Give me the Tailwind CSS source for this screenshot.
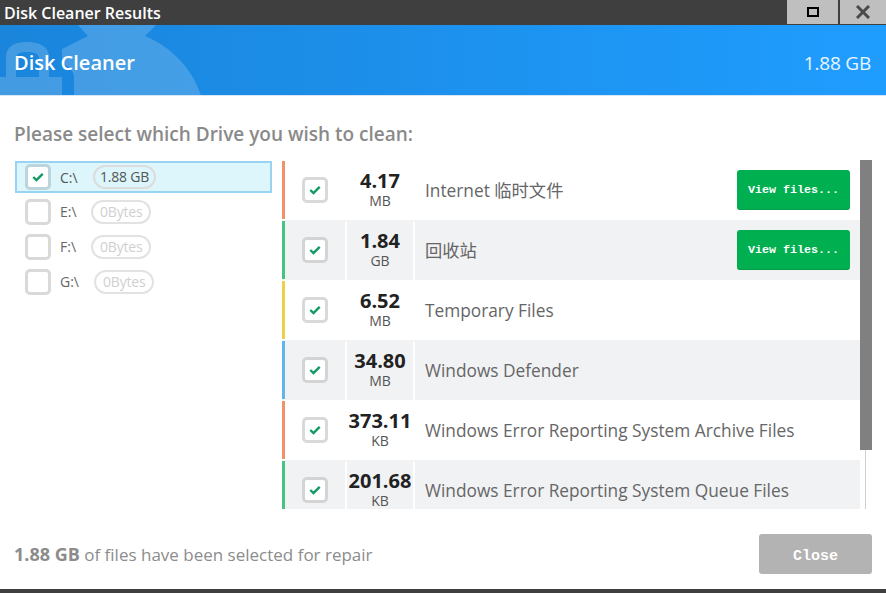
<!DOCTYPE html>
<html><head><meta charset="utf-8">
<script src="https://cdn.jsdelivr.net/npm/@tailwindcss/browser@4"></script>
<title>Disk Cleaner Results</title></head>
<body class="m-0 overflow-hidden bg-white">
<div class="w-[886px] h-[593px] flex flex-col bg-white font-['Open_Sans','Noto_Sans_CJK_SC',sans-serif]">
  <div class="h-[25px] shrink-0 bg-[#3f3f3f] flex items-start justify-between">
    <span class="pl-[4px] text-[16px] leading-[26px] font-semibold text-white">Disk Cleaner Results</span>
    <div class="flex gap-[2px]">
      <div class="w-[51px] h-[24px] bg-[#bfbfbf] flex items-center justify-center"><div class="w-[12px] h-[10px] border-2 border-black bg-transparent"></div></div>
      <div class="w-[46px] h-[24px] bg-[#bfbfbf] flex items-center justify-center">
        <svg width="14" height="14" viewBox="0 0 14 14"><path d="M1 1L13 13M13 1L1 13" stroke="#4a4a4a" stroke-width="3"/></svg>
      </div>
    </div>
  </div>
  <div class="relative h-[71px] shrink-0 overflow-hidden bg-gradient-to-r from-[#1a85db] to-[#1f9dff] border-b border-[#d6e6f5] flex items-center justify-between pl-[14px] pr-[15px] pt-[6px]">
    <svg class="absolute left-0 top-0" width="210" height="70" viewBox="0 0 210 70" fill="#ffffff" fill-opacity="0.18">
      <path d="M78 0H156L145 11C172 22 192 44 201 70H74V52C74 47 70 42 62 38V24L88 11Z"/>
      <path fill-rule="evenodd" d="M6 52V32C6 22 14 17 27 17C40 17 49 22 49 32V52ZM16 52H39V34C39 28 34 27 27 27C20 27 16 28 16 34Z"/>
      <path d="M0 52H62V70H0Z"/>
    </svg>
    <span class="relative text-[20px] font-semibold text-white">Disk Cleaner</span>
    <span class="relative text-[19px] text-white/90 tracking-[-0.2px]">1.88 GB</span>
  </div>
  <div class="flex-1 min-h-0 flex flex-col">
    <div class="h-[64px] shrink-0 pl-[14px] pt-[24px] text-[19px] leading-[28px] font-semibold text-[#8a8a8a]">Please select which Drive you wish to clean:</div>
    <div class="h-[349px] shrink-0 flex pl-[15px]">
      <div class="w-[257px] shrink-0 flex flex-col pt-[1px]">
        <div class="h-[32px] bg-[#dcf6fb] border-2 border-[#99d3f3] flex items-center pl-[8px]">
          <div class="w-[26px] h-[26px] shrink-0 rounded-[5px] border-[3px] border-[#bcd5dc] bg-white flex items-center justify-center">
            <svg width="12" height="10" viewBox="0 0 14 11"><path d="M1.5 5.5L5.2 9L12.5 1.8" fill="none" stroke="#119a63" stroke-width="2.8"/></svg>
          </div>
          <span class="ml-[9px] w-[33px] text-[14px] text-[#555]">C:\</span>
          <span class="h-[24px] px-[5px] rounded-full border-2 border-[#dcdcdc] text-[14px] leading-[20px] text-[#555] whitespace-nowrap tracking-[-0.2px]">1.88 GB</span>
        </div>
        <div class="mt-[3px] h-[31px] flex items-center pl-[10px]">
          <div class="w-[26px] h-[26px] shrink-0 rounded-[5px] border-[3px] border-[#d9d9d9] bg-white"></div>
          <span class="ml-[9px] w-[31px] text-[14px] text-[#666]">E:\</span>
          <span class="h-[24px] px-[7px] rounded-full border-2 border-[#e2e2e2] text-[14px] leading-[20px] text-[#cfcfcf] tracking-[-0.2px]">0Bytes</span>
        </div>
        <div class="mt-[4px] h-[31px] flex items-center pl-[10px]">
          <div class="w-[26px] h-[26px] shrink-0 rounded-[5px] border-[3px] border-[#d9d9d9] bg-white"></div>
          <span class="ml-[9px] w-[31px] text-[14px] text-[#666]">F:\</span>
          <span class="h-[24px] px-[7px] rounded-full border-2 border-[#e2e2e2] text-[14px] leading-[20px] text-[#cfcfcf] tracking-[-0.2px]">0Bytes</span>
        </div>
        <div class="mt-[4px] h-[31px] flex items-center pl-[10px]">
          <div class="w-[26px] h-[26px] shrink-0 rounded-[5px] border-[3px] border-[#d9d9d9] bg-white"></div>
          <span class="ml-[9px] w-[34px] text-[14px] text-[#666]">G:\</span>
          <span class="h-[24px] px-[7px] rounded-full border-2 border-[#e2e2e2] text-[14px] leading-[20px] text-[#cfcfcf] tracking-[-0.2px]">0Bytes</span>
        </div>
      </div>
      <div class="ml-[10px] w-[578px] shrink-0 overflow-hidden flex flex-col">
        <div class="h-[60px] shrink-0 flex bg-white">
          <div class="w-[3px] my-[1px] bg-[#f29268]"></div>
          <div class="w-[60px] flex items-center justify-center"><div class="w-[26px] h-[26px] rounded-[5px] border-[3px] border-[#d9d9d9] bg-white flex items-center justify-center"><svg width="12" height="10" viewBox="0 0 14 11"><path d="M1.5 5.5L5.2 9L12.5 1.8" fill="none" stroke="#119a63" stroke-width="2.8"/></svg></div></div>
          <div class="w-[70px] border-x-2 border-white mt-[2px] flex flex-col items-center justify-center"><span class="text-[20px] leading-[20px] font-bold text-[#222]">4.17</span><span class="text-[14px] leading-[20px] text-[#555]">MB</span></div>
          <div class="flex-1 flex items-center pl-[10px] pt-[2px] text-[17.3px] text-[#666]">Internet 临时文件</div>
          <div class="flex items-center pr-[10px]"><div class="w-[113px] h-[40px] pt-[2px] rounded-[3px] bg-[#00b050] border-b border-[#079a48] flex items-center justify-center text-[11.7px] font-bold text-white font-['Liberation_Mono',monospace]">View files...</div></div>
        </div>
        <div class="h-[60px] shrink-0 flex bg-[#f1f2f4]">
          <div class="w-[3px] my-[1px] bg-[#45c47f]"></div>
          <div class="w-[60px] flex items-center justify-center"><div class="w-[26px] h-[26px] rounded-[5px] border-[3px] border-[#d4d4d4] bg-white flex items-center justify-center"><svg width="12" height="10" viewBox="0 0 14 11"><path d="M1.5 5.5L5.2 9L12.5 1.8" fill="none" stroke="#119a63" stroke-width="2.8"/></svg></div></div>
          <div class="w-[70px] border-x-2 border-white mt-[2px] flex flex-col items-center justify-center"><span class="text-[20px] leading-[20px] font-bold text-[#222]">1.84</span><span class="text-[14px] leading-[20px] text-[#555]">GB</span></div>
          <div class="flex-1 flex items-center pl-[10px] pt-[2px] text-[17.3px] text-[#666]">回收站</div>
          <div class="flex items-center pr-[10px]"><div class="w-[113px] h-[40px] pt-[2px] rounded-[3px] bg-[#00b050] border-b border-[#079a48] flex items-center justify-center text-[11.7px] font-bold text-white font-['Liberation_Mono',monospace]">View files...</div></div>
        </div>
        <div class="h-[60px] shrink-0 flex bg-white">
          <div class="w-[3px] my-[1px] bg-[#ebd048]"></div>
          <div class="w-[60px] flex items-center justify-center"><div class="w-[26px] h-[26px] rounded-[5px] border-[3px] border-[#d9d9d9] bg-white flex items-center justify-center"><svg width="12" height="10" viewBox="0 0 14 11"><path d="M1.5 5.5L5.2 9L12.5 1.8" fill="none" stroke="#119a63" stroke-width="2.8"/></svg></div></div>
          <div class="w-[70px] border-x-2 border-white mt-[2px] flex flex-col items-center justify-center"><span class="text-[20px] leading-[20px] font-bold text-[#222]">6.52</span><span class="text-[14px] leading-[20px] text-[#555]">MB</span></div>
          <div class="flex-1 flex items-center pl-[10px] pt-[2px] text-[17.3px] text-[#666]">Temporary Files</div>
        </div>
        <div class="h-[60px] shrink-0 flex bg-[#f1f2f4]">
          <div class="w-[3px] my-[1px] bg-[#62b5e8]"></div>
          <div class="w-[60px] flex items-center justify-center"><div class="w-[26px] h-[26px] rounded-[5px] border-[3px] border-[#d4d4d4] bg-white flex items-center justify-center"><svg width="12" height="10" viewBox="0 0 14 11"><path d="M1.5 5.5L5.2 9L12.5 1.8" fill="none" stroke="#119a63" stroke-width="2.8"/></svg></div></div>
          <div class="w-[70px] border-x-2 border-white mt-[2px] flex flex-col items-center justify-center"><span class="text-[20px] leading-[20px] font-bold text-[#222]">34.80</span><span class="text-[14px] leading-[20px] text-[#555]">MB</span></div>
          <div class="flex-1 flex items-center pl-[10px] pt-[2px] text-[17.3px] text-[#666]">Windows Defender</div>
        </div>
        <div class="h-[60px] shrink-0 flex bg-white">
          <div class="w-[3px] my-[1px] bg-[#f29268]"></div>
          <div class="w-[60px] flex items-center justify-center"><div class="w-[26px] h-[26px] rounded-[5px] border-[3px] border-[#d9d9d9] bg-white flex items-center justify-center"><svg width="12" height="10" viewBox="0 0 14 11"><path d="M1.5 5.5L5.2 9L12.5 1.8" fill="none" stroke="#119a63" stroke-width="2.8"/></svg></div></div>
          <div class="w-[70px] border-x-2 border-white mt-[2px] flex flex-col items-center justify-center"><span class="text-[20px] leading-[20px] font-bold text-[#222] whitespace-nowrap">373.11</span><span class="text-[14px] leading-[20px] text-[#555]">KB</span></div>
          <div class="flex-1 flex items-center pl-[10px] pt-[2px] text-[17.3px] text-[#666]">Windows Error Reporting System Archive Files</div>
        </div>
        <div class="h-[60px] shrink-0 flex bg-[#f1f2f4]">
          <div class="w-[3px] my-[1px] bg-[#45c47f]"></div>
          <div class="w-[60px] flex items-center justify-center"><div class="w-[26px] h-[26px] rounded-[5px] border-[3px] border-[#d4d4d4] bg-white flex items-center justify-center"><svg width="12" height="10" viewBox="0 0 14 11"><path d="M1.5 5.5L5.2 9L12.5 1.8" fill="none" stroke="#119a63" stroke-width="2.8"/></svg></div></div>
          <div class="w-[70px] border-x-2 border-white mt-[2px] flex flex-col items-center justify-center"><span class="text-[20px] leading-[20px] font-bold text-[#222] whitespace-nowrap">201.68</span><span class="text-[14px] leading-[20px] text-[#555]">KB</span></div>
          <div class="flex-1 flex items-center pl-[10px] pt-[2px] text-[17.3px] text-[#666]">Windows Error Reporting System Queue Files</div>
        </div>
      </div>
      <div class="relative w-[12px] shrink-0">
        <div class="absolute left-[5px] top-0 bottom-0 w-[1px] bg-[#d0d0d0]"></div>
        <div class="absolute left-0 top-0 w-[12px] h-[290px] bg-[#808080]"></div>
      </div>
    </div>
    <div class="flex-1 flex items-start justify-between pl-[14px] pr-[14px] pt-[25px]">
      <div class="pt-[8px] text-[17px] leading-[24px] text-[#8c8c8c]"><span class="font-bold text-[18px]">1.88 GB</span> of files have been selected for repair</div>
      <div class="w-[113px] h-[40px] pt-[6px] rounded-[3px] bg-[#b3b3b3] flex items-center justify-center text-[15px] font-bold text-white font-['Liberation_Mono',monospace]">Close</div>
    </div>
  </div>
  <div class="h-[4px] shrink-0 bg-[#3f3f3f]"></div>
</div>
</body></html>
